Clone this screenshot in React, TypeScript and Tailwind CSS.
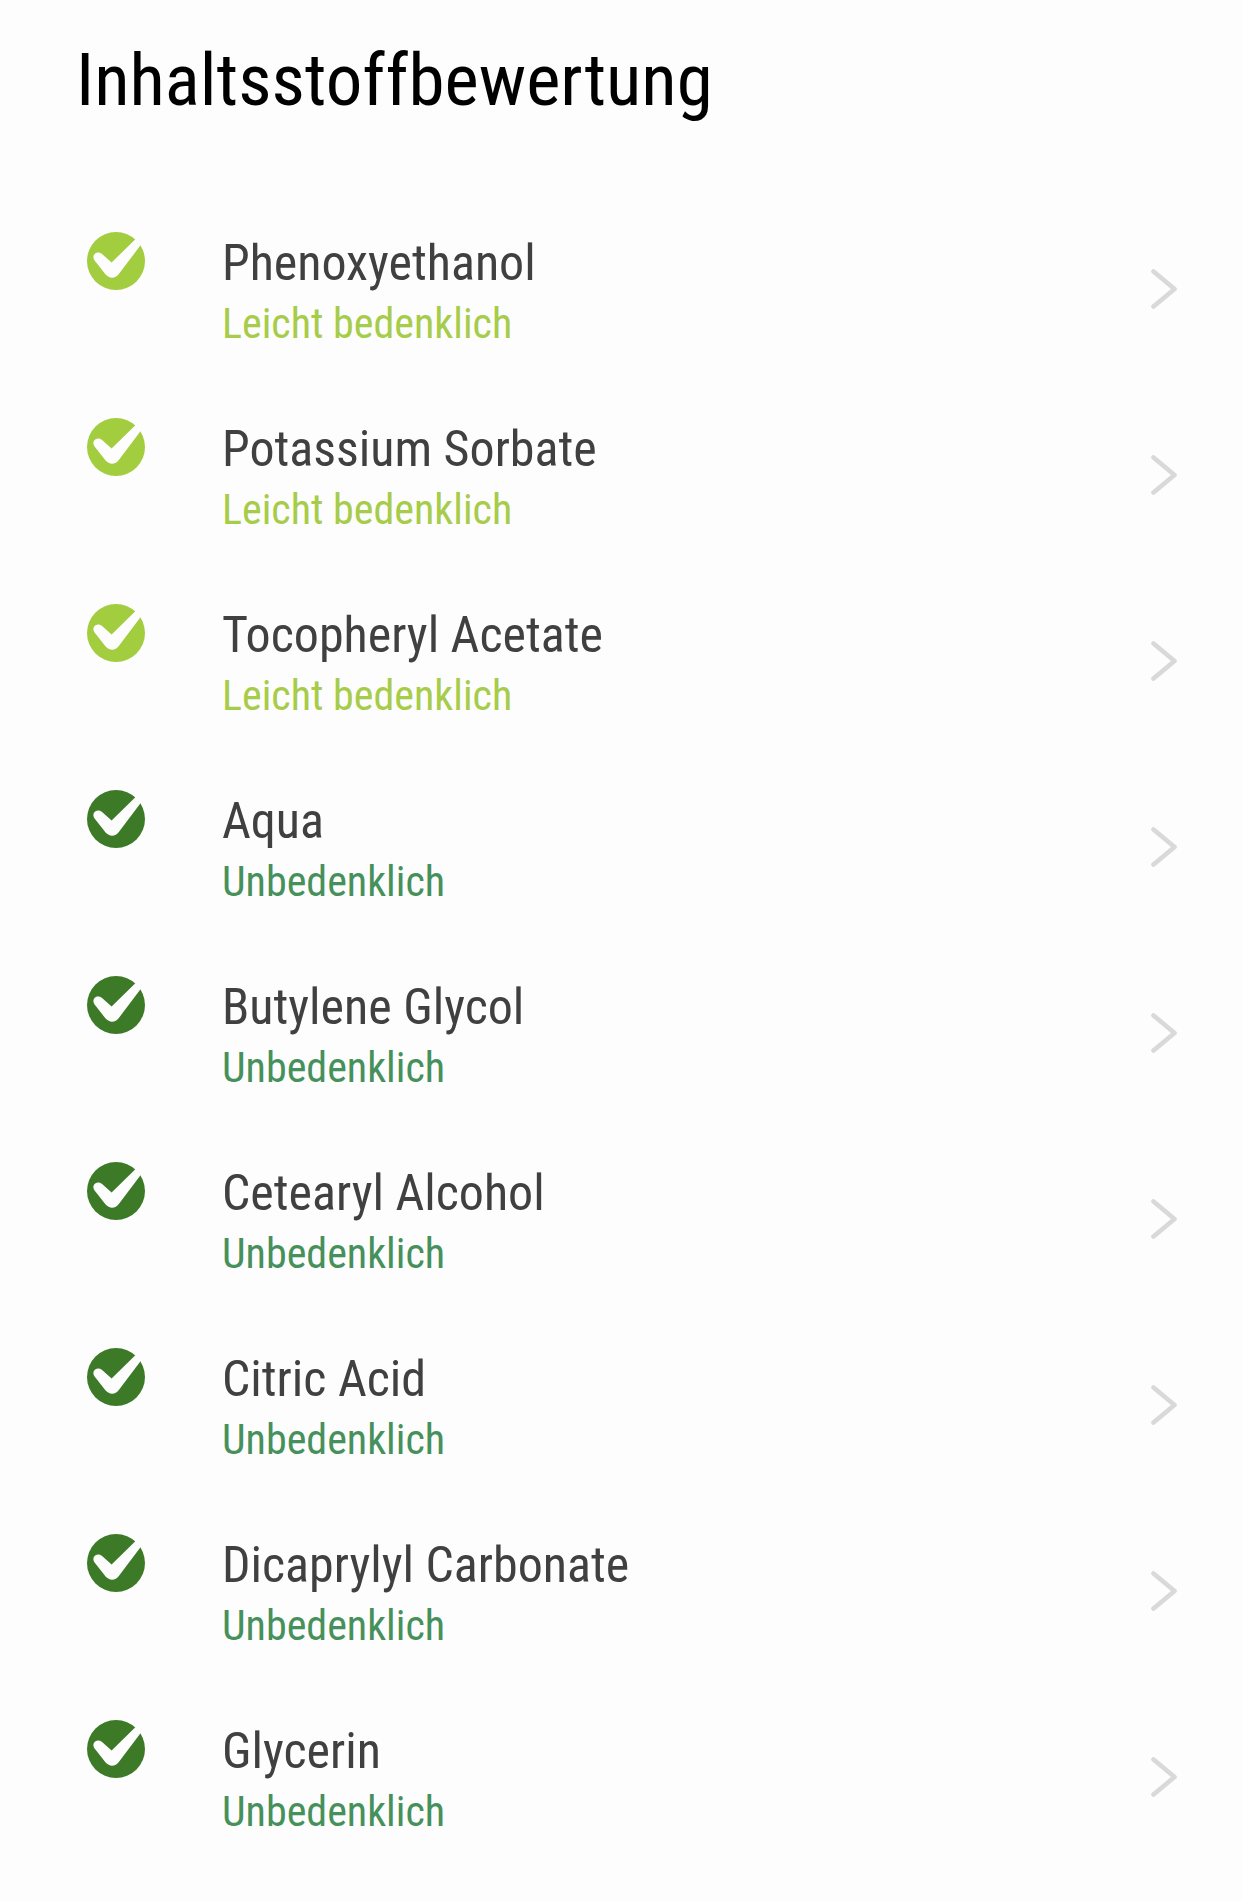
type Rating = 'slight' | 'safe';

interface Ingredient {
  name: string;
  rating: Rating;
}

const ingredients: Ingredient[] = [
  { name: 'Phenoxyethanol', rating: 'slight' },
  { name: 'Potassium Sorbate', rating: 'slight' },
  { name: 'Tocopheryl Acetate', rating: 'slight' },
  { name: 'Aqua', rating: 'safe' },
  { name: 'Butylene Glycol', rating: 'safe' },
  { name: 'Cetearyl Alcohol', rating: 'safe' },
  { name: 'Citric Acid', rating: 'safe' },
  { name: 'Dicaprylyl Carbonate', rating: 'safe' },
  { name: 'Glycerin', rating: 'safe' },
];

const ratings = {
  slight: { label: 'Leicht bedenklich', icon: 'text-[#a2cd3f]', text: 'text-[#a6cc4a]' },
  safe: { label: 'Unbedenklich', icon: 'text-[#3d7a27]', text: 'text-[#46905c]' },
};

const CheckBadge = ({ className }: { className: string }) => (
  <svg viewBox="0 0 58 58" className={`size-[58px] shrink-0 ${className}`} aria-hidden="true">
    <circle cx="29" cy="29" r="29" fill="currentColor" />
    <path
      d="M24.6 30.6L48.6 7L56 4L58 8L53.3 13.6L32 41.8C28.5 46.8 22.5 47 18.6 42.6L7.6 28.4C3.8 23 9.8 17.8 14.8 21.8Z"
      fill="#fdfdfd"
    />
  </svg>
);

const Chevron = () => (
  <svg viewBox="0 0 26 40" className="h-10 w-[26px] shrink-0 self-center text-[#d9d9d9]" aria-hidden="true">
    <path
      d="M2.5 2.5L23.5 20L2.5 37.5"
      fill="none"
      stroke="currentColor"
      strokeWidth="4.6"
      strokeLinecap="round"
      strokeLinejoin="round"
    />
  </svg>
);

const IngredientRow = ({ name, rating }: Ingredient) => {
  const { label, icon, text } = ratings[rating];

  return (
    <li>
      <a href="#" className="flex h-[186px] items-start pt-px">
        <span className="pt-9">
          <CheckBadge className={icon} />
        </span>
        <span className="ml-[77px] flex flex-1 flex-col pt-9">
          <span className="text-[50px] leading-[62px] text-[#404040]">{name}</span>
          <span className={`text-[42px] leading-[60px] ${text}`}>{label}</span>
        </span>
        <Chevron />
      </a>
    </li>
  );
};

export default function App() {
  return (
    <main className="min-h-screen bg-[#fdfdfd] pt-9 pr-[65px] pb-8 pl-[76px] font-['Roboto_Condensed',Roboto,sans-serif]">
      <h1 className="text-[73px] leading-[88px] text-black">Inhaltsstoffbewertung</h1>
      <ul className="mt-[71px] pl-[11px]">
        {ingredients.map((item) => (
          <IngredientRow key={item.name} {...item} />
        ))}
      </ul>
    </main>
  );
}
